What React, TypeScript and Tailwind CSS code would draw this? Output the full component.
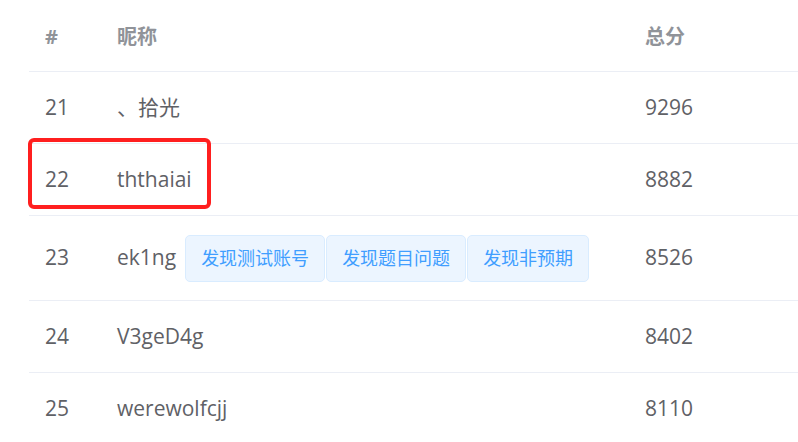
import React from "react";

interface Row {
  rank: number;
  name: string;
  score: number;
  tags?: string[];
}

const rows: Row[] = [
  { rank: 21, name: "、拾光", score: 9296 },
  { rank: 22, name: "ththaiai", score: 8882 },
  { rank: 23, name: "ek1ng", score: 8526, tags: ["发现测试账号", "发现题目问题", "发现非预期"] },
  { rank: 24, name: "V3geD4g", score: 8402 },
  { rank: 25, name: "werewolfcjj", score: 8110 },
];

export default function App() {
  return (
    <div
      className="relative w-[798px] h-[442px] overflow-hidden bg-white pl-[29px]"
      style={{ fontFamily: '"Open Sans", "Noto Sans CJK SC", sans-serif' }}
    >
      <div className="w-[900px]">
        {/* header */}
        <div className="flex items-center h-[72px] pt-[3px] border-b border-[#ebeef5] text-[20px] font-bold text-[#909399]">
          <div className="w-[72px] pl-4">#</div>
          <div className="w-[528px] pl-4">昵称</div>
          <div className="pl-4">总分</div>
        </div>

        {rows.map((r) => (
          <div
            key={r.rank}
            className={`flex items-center border-b border-[#ebeef5] text-[21px] text-[#5f6166] ${
              r.tags ? "h-[85px]" : "h-[72px]"
            }`}
          >
            <div className="w-[72px] pl-4">{r.rank}</div>
            <div className="w-[528px] pl-4 flex items-center">
              <span>{r.name}</span>
              {r.tags && (
                <div className="flex gap-px ml-[9px]">
                  {r.tags.map((t) => (
                    <span
                      key={t}
                      className="h-[47px] px-[15px] flex items-center rounded-[5px] border border-[#d9ecff] bg-[#ecf5ff] text-[#409eff] text-[18px]"
                    >
                      {t}
                    </span>
                  ))}
                </div>
              )}
            </div>
            <div className="pl-4">{r.score}</div>
          </div>
        ))}
      </div>

      {/* highlight annotation */}
      <div className="absolute left-[28px] top-[138px] w-[183px] h-[71px] border-[4px] border-[#ff1f1f] rounded-[6px]" />
    </div>
  );
}
